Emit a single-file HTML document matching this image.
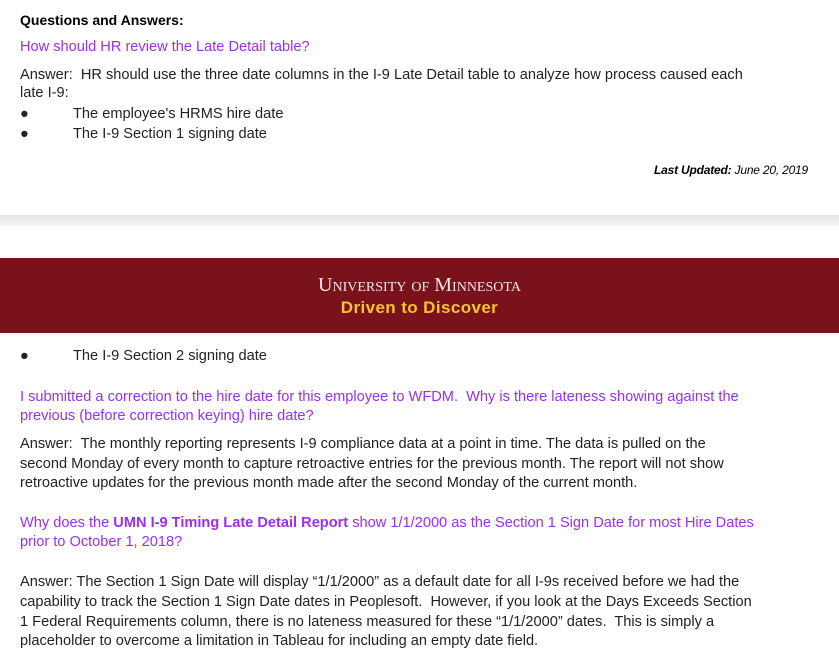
<!DOCTYPE html>
<html><head><meta charset="utf-8"><style>
html,body{margin:0;padding:0;background:#fff;width:839px;height:661px;overflow:hidden;position:relative}
div.l{position:absolute;white-space:nowrap;font-family:"Liberation Sans",Arial,sans-serif;font-size:14.6px;color:#222;line-height:18px}
div.l.p{color:#9a2ff0}
.b{font-weight:bold}
</style></head><body>
<div class="l b" style="left:20px;top:11px;color:#000;font-size:14px">Questions and Answers:</div>
<div class="l p" style="left:20px;top:38px">How should HR review the Late Detail table?</div>
<div class="l" style="left:20px;top:66px">Answer:&nbsp; HR should use the three date columns in the I-9 Late Detail table to analyze how process caused each</div>
<div class="l" style="left:20px;top:84px">late I-9:</div>
<div class="l" style="left:20px;top:105px">●</div><div class="l" style="left:73px;top:105px">The employee's HRMS hire date</div>
<div class="l" style="left:20px;top:125px">●</div><div class="l" style="left:73px;top:125px">The I-9 Section 1 signing date</div>
<div class="l" style="left:654px;top:161px;font-size:12px;font-style:italic;color:#000;letter-spacing:-0.2px"><b>Last Updated:</b> June 20, 2019</div>
<div style="position:absolute;left:0;top:215px;width:839px;height:11px;background:linear-gradient(#e4e5e8,#f4f5f7)"></div>
<div style="position:absolute;left:0;top:258px;width:839px;height:75px;background:#7a121c"></div>
<div class="l" style="left:0;width:839px;text-align:center;top:274px;font-family:'Liberation Serif',serif;font-size:20px;line-height:22px;color:#f0e6e6;font-variant:small-caps">University of Minnesota</div>
<div class="l b" style="left:0;width:839px;text-align:center;top:298px;font-size:17px;line-height:20px;color:#f4c430;letter-spacing:0.4px">Driven to Discover</div>
<div class="l" style="left:20px;top:347px">●</div><div class="l" style="left:73px;top:347px">The I-9 Section 2 signing date</div>
<div class="l p" style="left:20px;top:388px">I submitted a correction to the hire date for this employee to WFDM.&nbsp; Why is there lateness showing against the</div>
<div class="l p" style="left:20px;top:407px">previous (before correction keying) hire date?</div>
<div class="l" style="left:20px;top:435px">Answer:&nbsp; The monthly reporting represents I-9 compliance data at a point in time. The data is pulled on the</div>
<div class="l" style="left:20px;top:455px">second Monday of every month to capture retroactive entries for the previous month. The report will not show</div>
<div class="l" style="left:20px;top:474px">retroactive updates for the previous month made after the second Monday of the current month.</div>
<div class="l p" style="left:20px;top:514px">Why does the <b>UMN I-9 Timing Late Detail Report</b> show 1/1/2000 as the Section 1 Sign Date for most Hire Dates</div>
<div class="l p" style="left:20px;top:533px">prior to October 1, 2018?</div>
<div class="l" style="left:20px;top:573px">Answer: The Section 1 Sign Date will display “1/1/2000” as a default date for all I-9s received before we had the</div>
<div class="l" style="left:20px;top:593px">capability to track the Section 1 Sign Date dates in Peoplesoft.&nbsp; However, if you look at the Days Exceeds Section</div>
<div class="l" style="left:20px;top:613px">1 Federal Requirements column, there is no lateness measured for these “1/1/2000” dates.&nbsp; This is simply a</div>
<div class="l" style="left:20px;top:632px">placeholder to overcome a limitation in Tableau for including an empty date field.</div>
</body></html>
